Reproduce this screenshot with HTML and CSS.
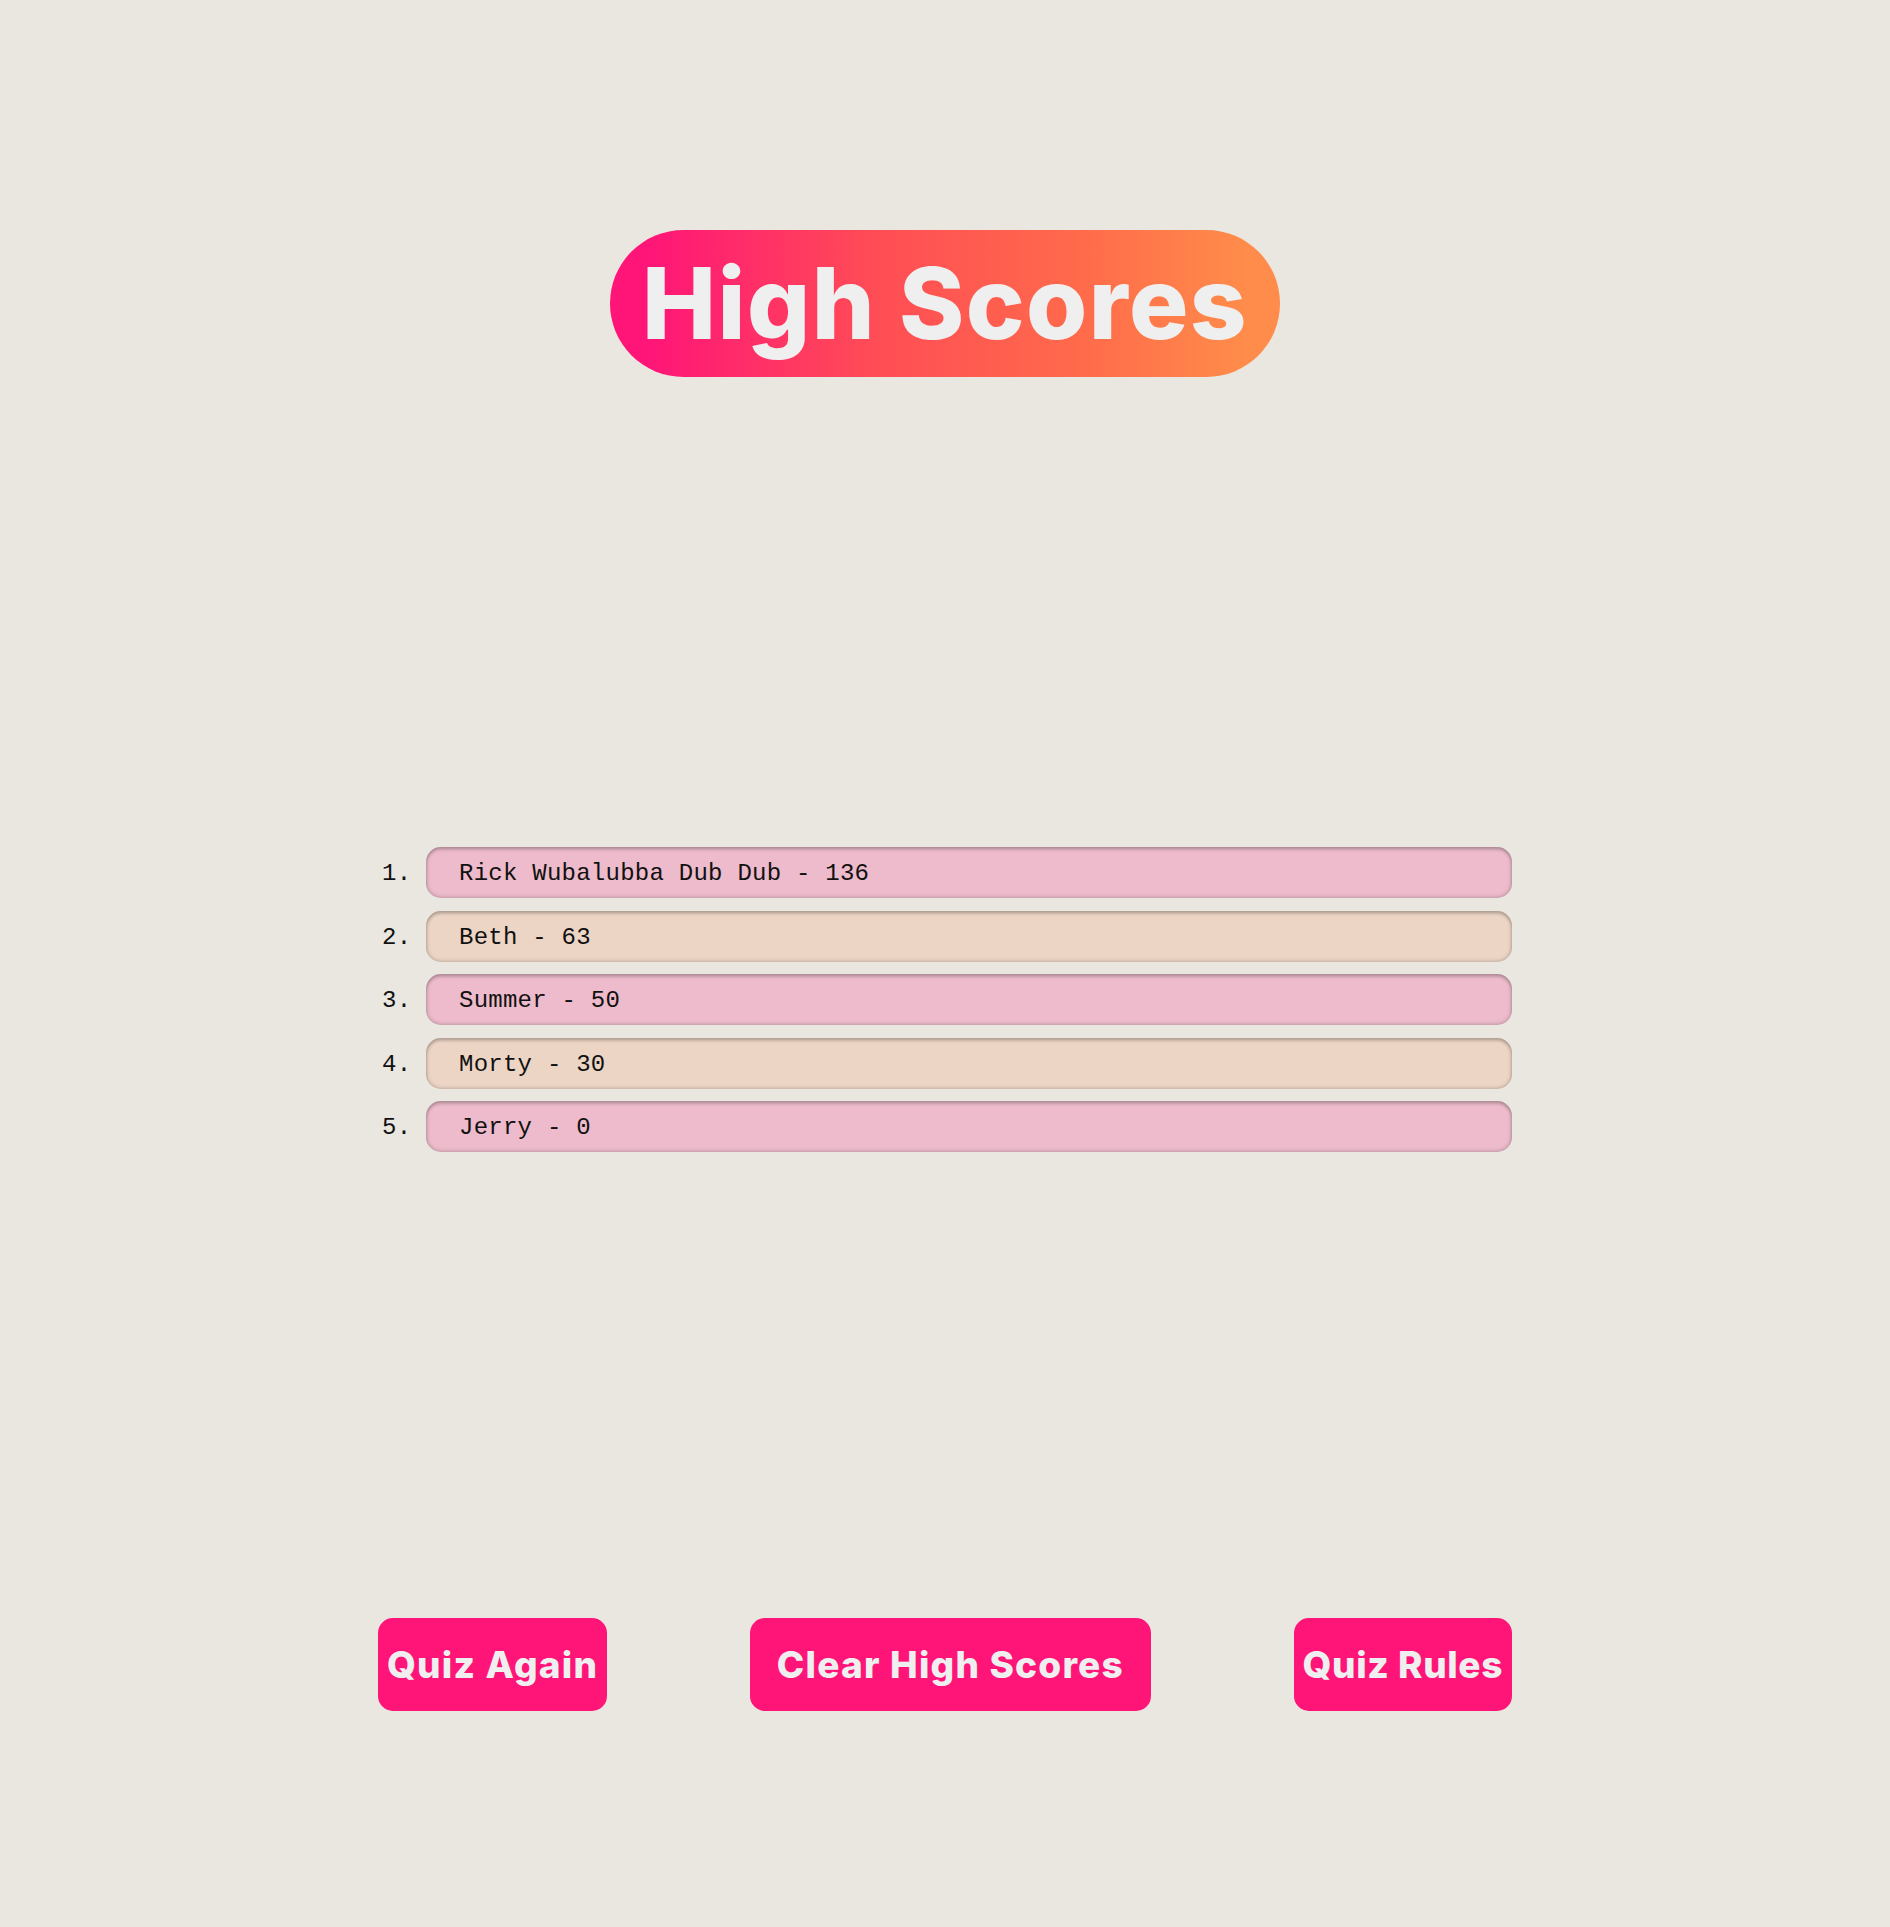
FILE: index.html
```html
<!DOCTYPE html>
<html lang="en">
<head>
<meta charset="utf-8">
<title>High Scores</title>
<link rel="stylesheet" href="styles.css">
</head>
<body>
<main class="page">
  <header class="title-wrap">
    <h1 class="title">High Scores</h1>
  </header>
  <ol class="scores">
    <li class="score score-pink">Rick Wubalubba Dub Dub - 136</li>
    <li class="score score-peach">Beth - 63</li>
    <li class="score score-pink">Summer - 50</li>
    <li class="score score-peach">Morty - 30</li>
    <li class="score score-pink">Jerry - 0</li>
  </ol>
  <div class="actions">
    <button class="btn">Quiz Again</button>
    <button class="btn btn-wide">Clear High Scores</button>
    <button class="btn btn-tight">Quiz Rules</button>
  </div>
</main>
</body>
</html>
```
FILE: styles.css
```css
html, body {
  margin: 0;
  padding: 0;
  background: #eae7e0;
}
body {
  min-height: 1927px;
  font-family: "Inter", "Liberation Sans", sans-serif;
}
.page {
  width: 1134px;
  margin: 0 auto;
  padding-top: 230px;
}
.title-wrap {
  display: flex;
  justify-content: center;
}
.title {
  margin: 0;
  height: 147px;
  display: flex;
  align-items: center;
  padding: 0 32px;
  border-radius: 74px;
  background: linear-gradient(90deg, #ff1478 5%, #ff4d55 40%, #ff6a4b 70%, #ff8c4a 95%);
  color: #f0efef;
  font-size: 99px;
  font-weight: 800;
  line-height: 1;
  letter-spacing: 1.4px;
}
.scores {
  margin: 470px 0 0 0;
  padding: 0 0 0 48px;
  list-style: decimal outside;
  font-family: "Liberation Mono", "DejaVu Sans Mono", monospace;
  font-size: 24px;
  letter-spacing: 0.25px;
  color: #111;
}
.score {
  height: 51px;
  line-height: 54px;
  padding-left: 33px;
  margin-bottom: 12.6px;
  border-radius: 15px;
  box-shadow: inset 0 0 4px rgba(0, 0, 0, 0.3), inset 0 3px 3px rgba(0, 0, 0, 0.14);
}
.score-pink { background: #edbbcb; }
.score-peach { background: #edd5c5; }
.actions {
  margin-top: 466px;
  display: flex;
  justify-content: space-between;
}
.btn {
  height: 93px;
  padding: 0 9px;
  border: none;
  border-radius: 15px;
  background: #ff1478;
  color: #f0efef;
  font-family: "Inter", "Liberation Sans", sans-serif;
  font-size: 37px;
  font-weight: 800;
  letter-spacing: 1.2px;
}
.btn-wide {
  padding: 0 27px;
}
.btn-tight {
  letter-spacing: 0.6px;
}
```
